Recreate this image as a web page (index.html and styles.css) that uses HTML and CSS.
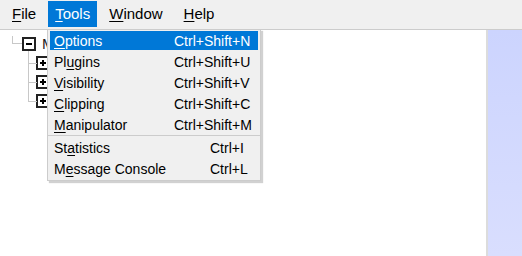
FILE: index.html
```html
<!DOCTYPE html>
<html>
<head>
<meta charset="utf-8">
<link rel="stylesheet" href="styles.css">
</head>
<body>
<div class="app">
  <div class="menubar">
    <div class="mitem"><u>F</u>ile</div>
    <div class="mitem active"><u>T</u>ools</div>
    <div class="mitem"><u>W</u>indow</div>
    <div class="mitem help"><u>H</u>elp</div>
  </div>
  <div class="content">
    <div class="treearea">
      <div class="tree">
        <div class="node root">
          <svg class="box" width="14" height="14" viewBox="0 0 14 14"><rect x="1" y="1" width="12" height="12" fill="#fff" stroke="#222" stroke-width="2"/><line x1="4" y1="7" x2="10" y2="7" stroke="#000" stroke-width="2"/></svg>
          <span class="label">M</span>
        </div>
        <div class="children">
          <div class="node child">
            <svg class="box" width="14" height="14" viewBox="0 0 14 14"><rect x="1" y="1" width="12" height="12" fill="#fff" stroke="#222" stroke-width="2"/><line x1="4" y1="7" x2="10" y2="7" stroke="#000" stroke-width="2"/><line x1="7" y1="4" x2="7" y2="10" stroke="#000" stroke-width="2"/></svg>
          </div>
          <div class="node child">
            <svg class="box" width="14" height="14" viewBox="0 0 14 14"><rect x="1" y="1" width="12" height="12" fill="#fff" stroke="#222" stroke-width="2"/><line x1="4" y1="7" x2="10" y2="7" stroke="#000" stroke-width="2"/><line x1="7" y1="4" x2="7" y2="10" stroke="#000" stroke-width="2"/></svg>
          </div>
          <div class="node child">
            <svg class="box" width="14" height="14" viewBox="0 0 14 14"><rect x="1" y="1" width="12" height="12" fill="#fff" stroke="#222" stroke-width="2"/><line x1="4" y1="7" x2="10" y2="7" stroke="#000" stroke-width="2"/><line x1="7" y1="4" x2="7" y2="10" stroke="#000" stroke-width="2"/></svg>
          </div>
        </div>
      </div>
    </div>
    <div class="sidepanel"></div>
  </div>

  <div class="dropdown">
    <div class="ditem hl"><span class="dl"><u>O</u>ptions</span><span class="ds">Ctrl+Shift+N</span></div>
    <div class="ditem"><span class="dl">Pl<u>u</u>gins</span><span class="ds">Ctrl+Shift+U</span></div>
    <div class="ditem"><span class="dl"><u>V</u>isibility</span><span class="ds">Ctrl+Shift+V</span></div>
    <div class="ditem"><span class="dl"><u>C</u>lipping</span><span class="ds">Ctrl+Shift+C</span></div>
    <div class="ditem"><span class="dl"><u>M</u>anipulator</span><span class="ds">Ctrl+Shift+M</span></div>
    <div class="sep"></div>
    <div class="ditem after-sep"><span class="dl">St<u>a</u>tistics</span><span class="ds short">Ctrl+I</span></div>
    <div class="ditem"><span class="dl">M<u>e</u>ssage Console</span><span class="ds short">Ctrl+L</span></div>
  </div>
</div>
</body>
</html>
```

FILE: styles.css
```css
* { box-sizing: border-box; }
html, body {
  margin: 0;
  padding: 0;
  width: 522px;
  height: 256px;
  overflow: hidden;
  background: #fff;
}
body {
  font-family: "Liberation Sans", Arial, sans-serif;
  font-size: 14px;
  color: #000;
}
u { text-decoration: underline; text-underline-offset: 2px; text-decoration-thickness: 1px; }

.app {
  position: relative;
  width: 522px;
  height: 256px;
  display: flex;
  flex-direction: column;
}

.menubar {
  height: 30px;
  flex: none;
  background: #f0f0f0;
  border-bottom: 1px solid #cccccc;
  display: flex;
  align-items: flex-start;
  padding: 1px 0 0 5px;
  gap: 5px;
  font-size: 15px;
}
.mitem {
  height: 26px;
  line-height: 26px;
  padding: 0 7px;
  white-space: nowrap;
}
.mitem.help { margin-left: 2px; }
.mitem.active {
  background: #0078d7;
  color: #fff;
}

.content {
  flex: 1;
  display: flex;
  min-height: 0;
}
.treearea {
  flex: 1;
  background: #fff;
  border-right: 2px solid #dcdcdc;
}
.sidepanel {
  width: 34px;
  flex: none;
  background: linear-gradient(to bottom, #ccd4fe, #d9defe);
}

.tree {
  padding: 7px 0 0 22px;
}
.node {
  position: relative;
  display: flex;
  align-items: center;
  gap: 6px;
}
.root { height: 14px; }
.root::before {
  content: "";
  position: absolute;
  left: -10px;
  top: -1px;
  width: 9px;
  height: 7px;
  border-left: 1px solid #c8c8c8;
  border-bottom: 1px solid #c8c8c8;
}
.box { display: block; flex: none; }
.label { line-height: 14px; color: #222; font-size: 15px; }

.children {
  padding-left: 14px;
}
.child {
  height: 19px;
  align-items: flex-end;
}
.child::before {
  content: "";
  position: absolute;
  left: -8px;
  top: 0;
  width: 8px;
  height: 12px;
  border-left: 1px solid #c8c8c8;
  border-bottom: 1px solid #c8c8c8;
}
.child:not(:last-child)::after {
  content: "";
  position: absolute;
  left: -8px;
  top: 12px;
  bottom: 0;
  border-left: 1px solid #c8c8c8;
}

.dropdown {
  position: absolute;
  left: 47px;
  top: 29px;
  width: 214px;
  background: #f0f0f0;
  border: 1px solid #cccccc;
  box-shadow: 2px 2px 1px rgba(0, 0, 0, 0.18);
  padding: 0 2px 1px 2px;
  display: flex;
  flex-direction: column;
}
.ditem {
  height: 19px;
  flex: none;
  margin: 1px 0;
  display: flex;
  align-items: center;
  padding-left: 4px;
  white-space: nowrap;
}
.ditem.hl {
  background: #0078d7;
  color: #fff;
}
.dl { flex: 1; }
.ds { width: 84px; flex: none; }
.ds.short { width: 48px; }
.sep {
  height: 1px;
  flex: none;
  background: #cccccc;
  margin: 0 -2px;
}
.after-sep { margin-top: 2px; }
```
